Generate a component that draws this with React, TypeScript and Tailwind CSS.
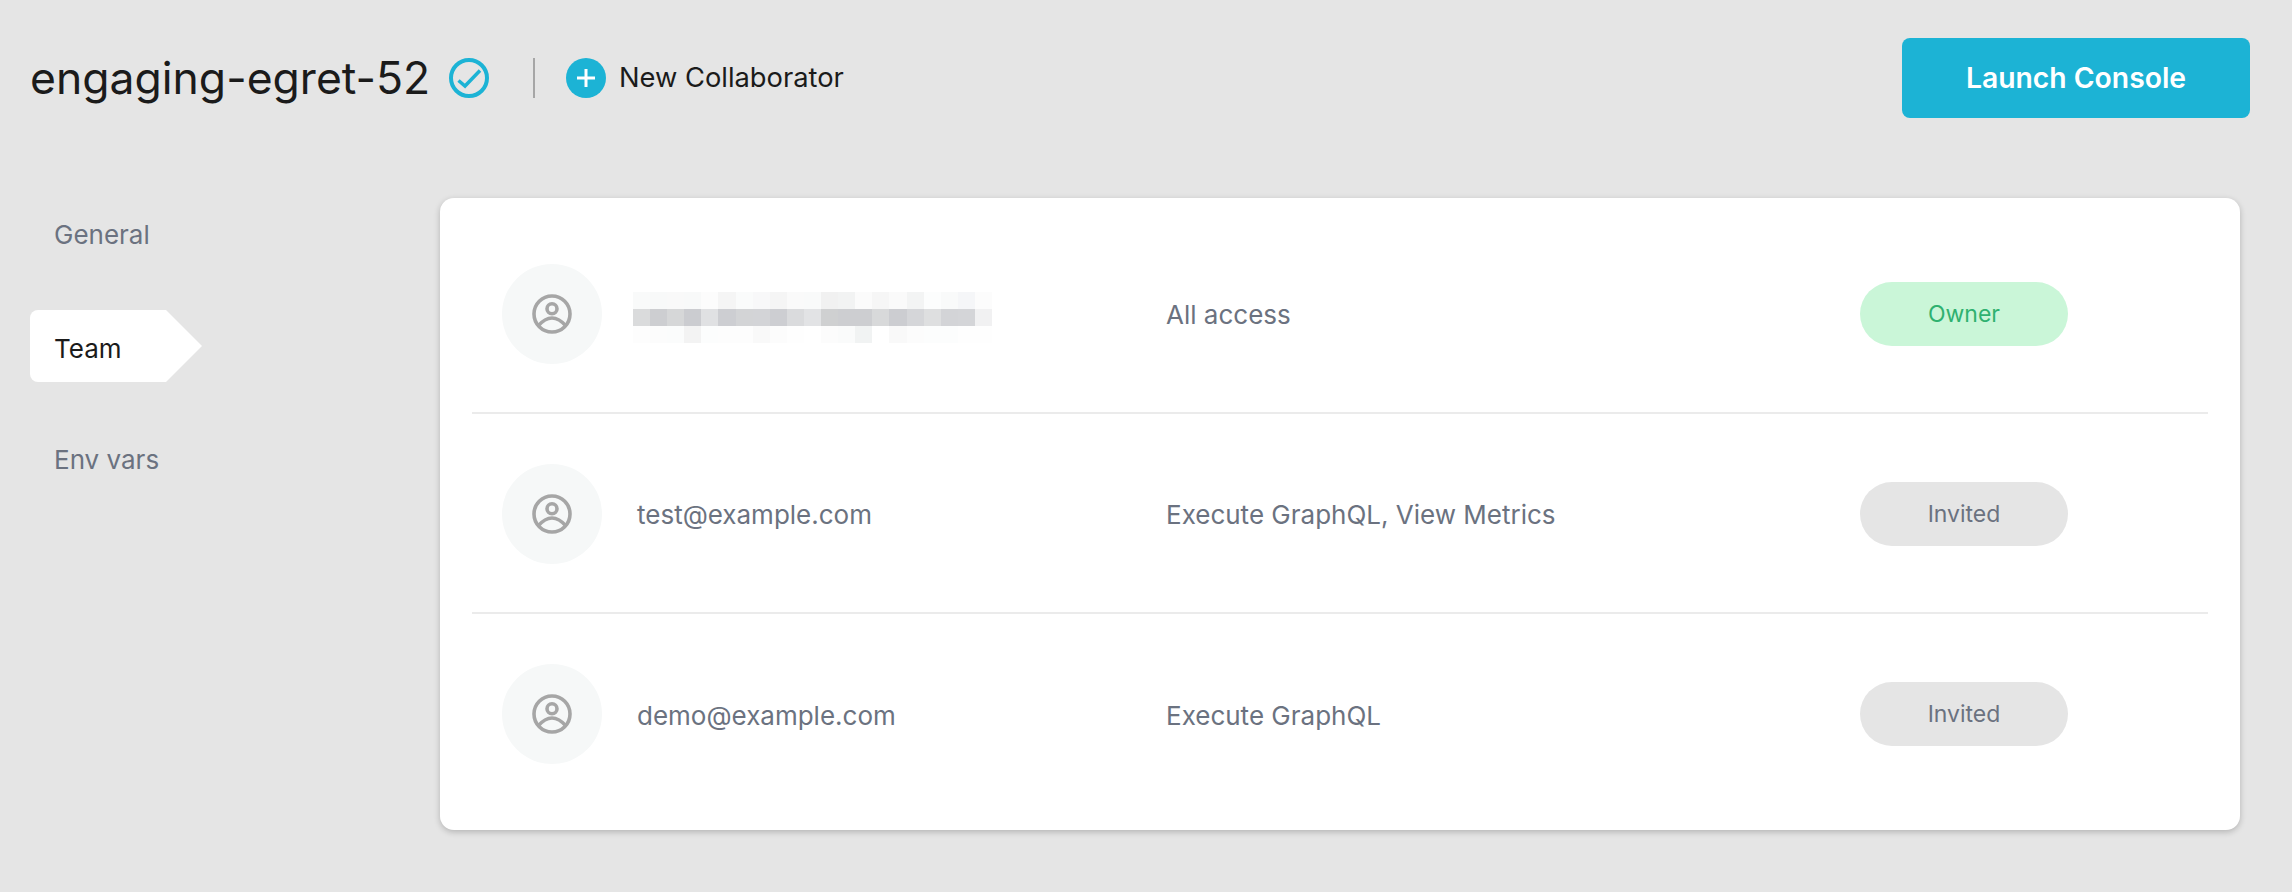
const topCells = [
  "bg-[#f9fafa]", "bg-[#f8f9f9]", "bg-[#f9f9f9]", "bg-[#f8f9f9]", "bg-[#fcfcfc]", "bg-[#f5f5f5]", "bg-[#fafbfb]",
  "bg-[#f8f8f9]", "bg-[#f5f5f5]", "bg-[#fafafa]", "bg-[#f9fafa]", "bg-[#f1f1f1]", "bg-[#f2f3f3]", "bg-[#fbfbfb]",
  "bg-[#f6f6f6]", "bg-[#fafafa]", "bg-[#f3f4f4]", "bg-[#fcfdfd]", "bg-[#f9fafa]", "bg-[#f5f6f8]", "bg-[#fcfcfc]",
];
const midCells = [
  "bg-[#dadbdc]", "bg-[#cdced1]", "bg-[#d6d7d8]", "bg-[#cbccd0]", "bg-[#e0e1e3]", "bg-[#cdced2]", "bg-[#d3d4d6]",
  "bg-[#d3d4d7]", "bg-[#cdced2]", "bg-[#dadbdd]", "bg-[#e2e3e5]", "bg-[#cfd0d1]", "bg-[#cdced1]", "bg-[#cdced1]",
  "bg-[#d8d9da]", "bg-[#cccdd1]", "bg-[#d5d6d9]", "bg-[#dedfe0]", "bg-[#d3d4d7]", "bg-[#d4d5d8]", "bg-[#f1f1f2]",
];
const bottomCells = [
  "bg-[#fdfdfd]", "bg-[#fcfcfc]", "bg-[#fbfcfc]", "bg-[#f3f3f3]", "bg-[#fcfdfd]", "bg-[#fdfdfd]", "bg-[#fdfdfd]",
  "bg-[#f9f9f9]", "bg-[#fcfcfc]", "bg-[#fefefe]", "bg-[#ffffff]", "bg-[#fcfcfc]", "bg-[#fafbfb]", "bg-[#f1f3f3]",
  "bg-[#ffffff]", "bg-[#f9f9f9]", "bg-[#fcfcfc]", "bg-[#fcfdfd]", "bg-[#fcfdfd]", "bg-[#fefefe]", "bg-[#fefefe]",
];

const members = [
  { email: null, access: "All access", status: "Owner" },
  { email: "test@example.com", access: "Execute GraphQL, View Metrics", status: "Invited" },
  { email: "demo@example.com", access: "Execute GraphQL", status: "Invited" },
];

function UserIcon() {
  return (
    <svg className="size-[40px]" viewBox="0 0 40 40" fill="none" stroke="#a6a6a6" strokeWidth="3.6">
      <circle cx="20" cy="20" r="18" />
      <circle cx="20" cy="14.8" r="5" />
      <path d="M6 32Q20 16 34 32" />
    </svg>
  );
}

function BlurredEmail() {
  return (
    <div className="-ml-1 mt-[7px] grid grid-cols-[repeat(21,17.1px)] auto-rows-[17px]">
      {[...topCells, ...midCells, ...bottomCells].map((cell, i) => (
        <div key={i} className={cell} />
      ))}
    </div>
  );
}

function MemberRow({ member, last }: { member: (typeof members)[number]; last: boolean }) {
  const isOwner = member.status === "Owner";
  return (
    <div className={`flex h-[200px] items-center pl-[30px] pt-[2px] ${last ? "pb-[2px]" : "border-b-2 border-[#ebebeb]"}`}>
      <div className="flex size-[100px] shrink-0 items-center justify-center rounded-full bg-[#f6f8f8]">
        <UserIcon />
      </div>
      <div className={`ml-[35px] w-[529px] shrink-0 text-[26px] text-[#6b7280] ${last ? "pt-[3px]" : ""}`}>
        {member.email ?? <BlurredEmail />}
      </div>
      <div className={`w-[694px] shrink-0 text-[26px] text-[#6b7280] ${last ? "pt-[3px]" : ""}`}>{member.access}</div>
      <div
        className={`flex h-[64px] w-[208px] shrink-0 items-center justify-center rounded-full text-[23px] ${
          isOwner ? "bg-[#caf6d8] text-[#2fb170]" : "bg-[#e5e5e5] text-[#6b7280]"
        }`}
      >
        {member.status}
      </div>
    </div>
  );
}

export default function App() {
  return (
    <div className="h-[892px] w-[2292px] overflow-hidden bg-[#e5e5e5] font-['Inter',sans-serif]">
      {/* Header */}
      <div className="flex items-center justify-between pl-[30px] pr-[42px] pt-[38px]">
        <div className="flex items-center">
          <h1 className="w-[399px] whitespace-nowrap text-[44.5px] font-normal text-[#1b1b1b]">engaging-egret-52</h1>
          <svg className="ml-[20px] size-[40px]" viewBox="0 0 40 40" fill="none" stroke="#1cb3d5">
            <circle cx="20" cy="20" r="18" strokeWidth="4" />
            <path d="M9.5 22.5L16 28L31 12.5" strokeWidth="3.5" />
          </svg>
          <div className="ml-[44px] h-[40px] w-[2px] bg-[#a6a6a6]" />
          <div className="ml-[31px] flex size-[40px] items-center justify-center rounded-full bg-[#1cb3d5]">
            <svg className="size-[20px]" viewBox="0 0 20 20" stroke="#ffffff" strokeWidth="3">
              <path d="M10 1V19M1 10H19" />
            </svg>
          </div>
          <span className="ml-[13px] text-[27.3px] text-[#1b1b1b]">New Collaborator</span>
        </div>
        <button className="h-[80px] w-[348px] rounded-[8px] bg-[#1cb3d5] text-[28.3px] font-semibold text-white">
          Launch Console
        </button>
      </div>

      {/* Body */}
      <div className="flex pl-[30px] pt-[80px]">
        <nav className="w-[410px] shrink-0 text-[26px] text-[#6b7280]">
          <div className="flex h-[72px] items-center pl-[24px] pt-[1px]">General</div>
          <div className="mt-[40px] flex">
            <div className="flex h-[72px] w-[136px] items-center rounded-l-[8px] bg-white pl-[24px] pt-[4px] text-[#1b1b1b]">
              Team
            </div>
            <div className="border-y-[36px] border-l-[36px] border-y-transparent border-l-white" />
          </div>
          <div className="mt-[40px] flex h-[72px] items-center pl-[24px] pt-[2px]">Env vars</div>
        </nav>
        <div className="w-[1800px] shrink-0 rounded-[14px] bg-white px-[32px] py-[16px] shadow-[0_2px_6px_rgba(0,0,0,0.22)]">
          {members.map((m, i) => (
            <MemberRow key={i} member={m} last={i === members.length - 1} />
          ))}
        </div>
      </div>
    </div>
  );
}
